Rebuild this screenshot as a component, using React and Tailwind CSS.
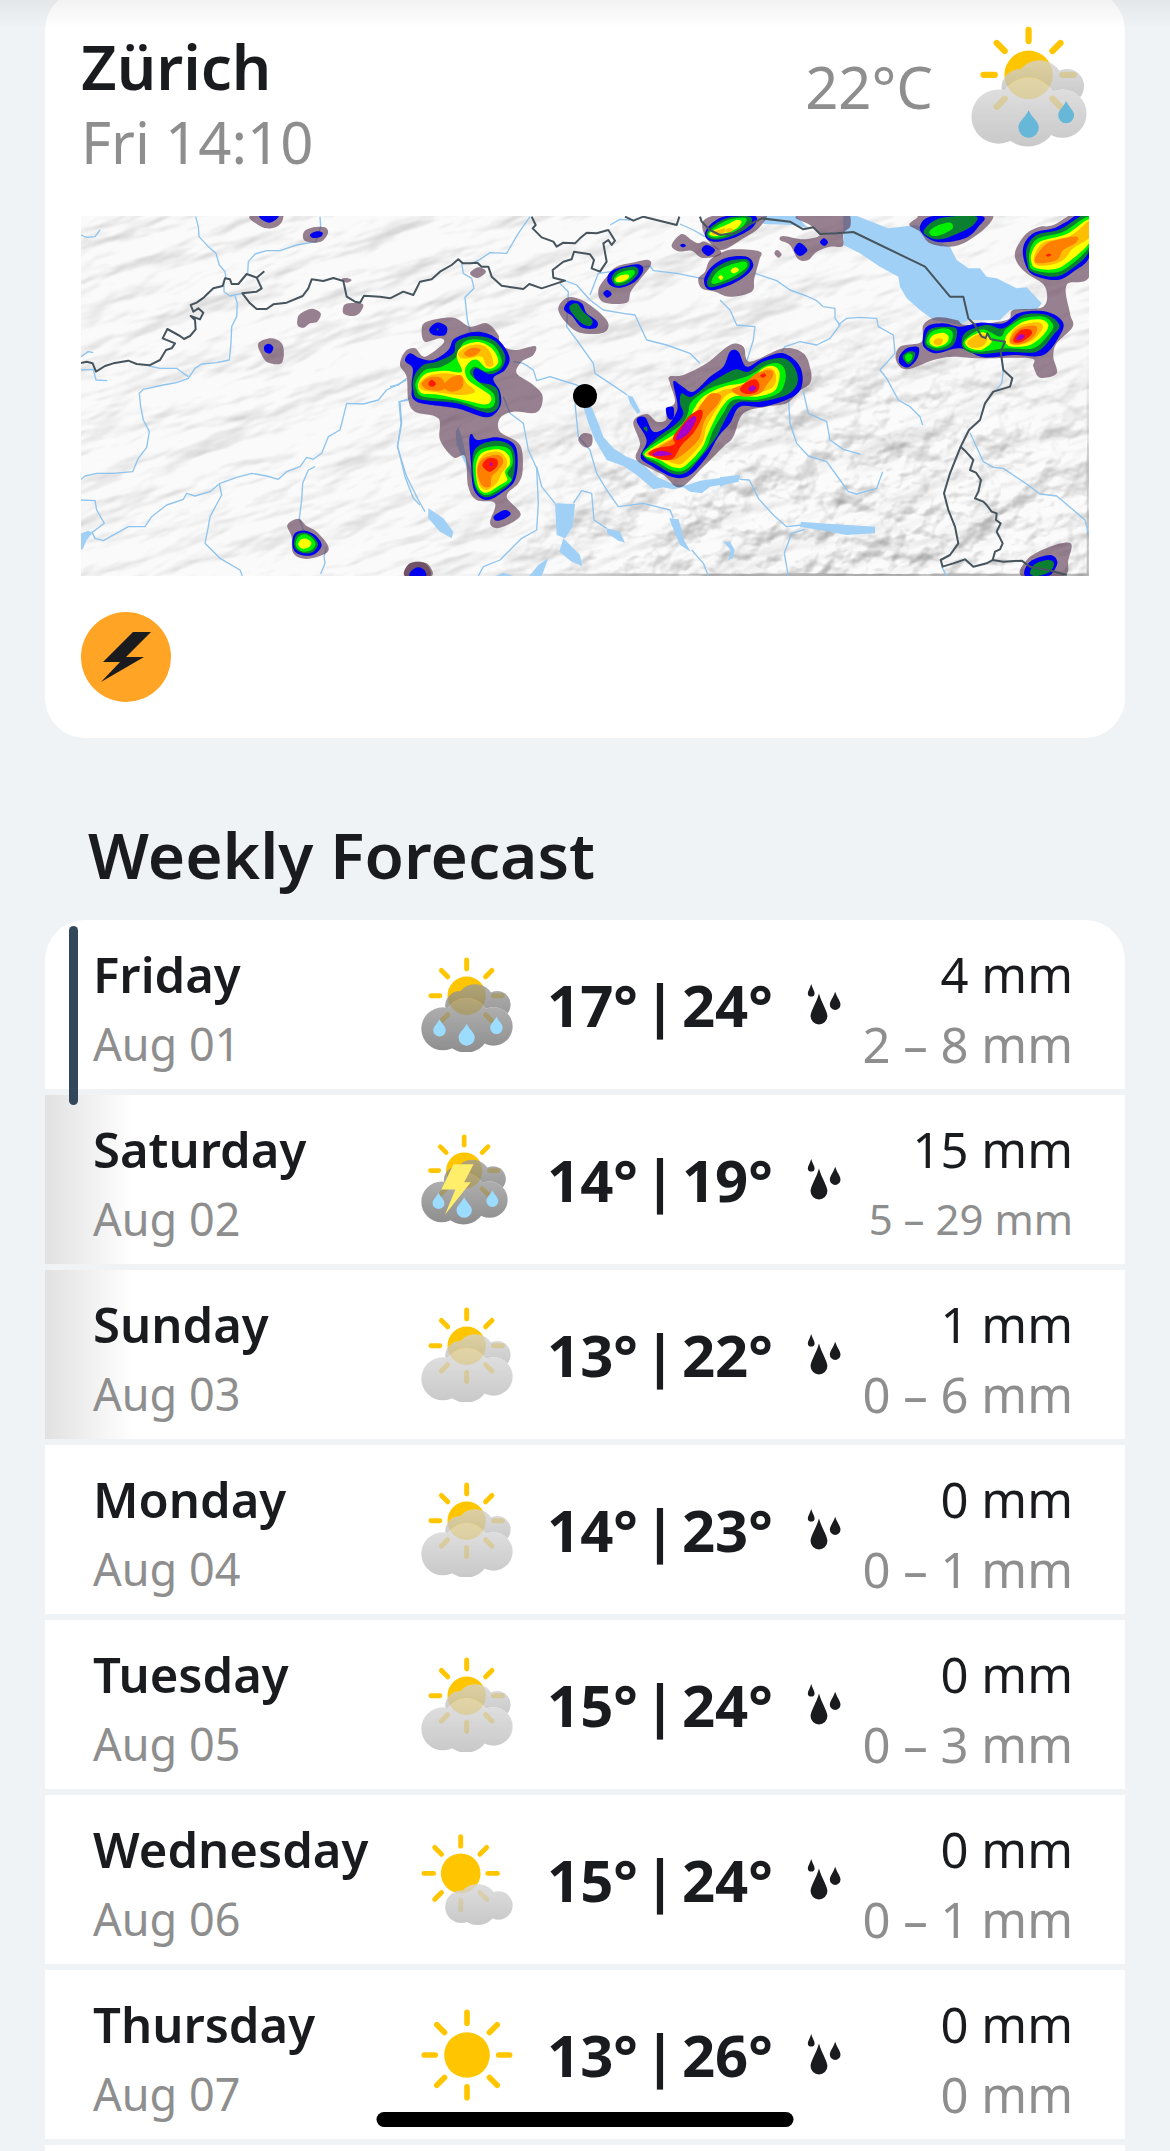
import React, { useId } from "react";

const FONT = "font-['Noto_Sans','Open_Sans',sans-serif]";

const forecast = [
    { day: "Friday", date: "Aug 01", icon: "rain", min: 17, max: 24, rain: "4 mm", range: "2 – 8 mm", current: true },
    { day: "Saturday", date: "Aug 02", icon: "thunder", min: 14, max: 19, rain: "15 mm", range: "5 – 29 mm", weekend: true },
    { day: "Sunday", date: "Aug 03", icon: "cloudy", min: 13, max: 22, rain: "1 mm", range: "0 – 6 mm", weekend: true },
    { day: "Monday", date: "Aug 04", icon: "cloudy", min: 14, max: 23, rain: "0 mm", range: "0 – 1 mm" },
    { day: "Tuesday", date: "Aug 05", icon: "cloudy", min: 15, max: 24, rain: "0 mm", range: "0 – 3 mm" },
    { day: "Wednesday", date: "Aug 06", icon: "fair", min: 15, max: 24, rain: "0 mm", range: "0 – 1 mm" },
    { day: "Thursday", date: "Aug 07", icon: "sunny", min: 13, max: 26, rain: "0 mm", range: "0 mm" },
];

/* ---------- weather icons ---------- */

const dropPath = (cx, top, bottom, w) => {
    const r = w / 2;
    const cy = bottom - r;
    return `M${cx} ${top}C${cx + r * 0.35} ${top + (cy - top) * 0.45} ${cx + r} ${cy - r * 0.6} ${cx + r} ${cy}A${r} ${r} 0 0 1 ${cx - r} ${cy}C${cx - r} ${cy - r * 0.6} ${cx - r * 0.35} ${top + (cy - top) * 0.45} ${cx} ${top}Z`;
};

const Sun = ({ cx, cy, r, inner, outer, width, angles }) => (
    <g>
        <circle cx={cx} cy={cy} r={r} fill="#ffc600" />
        {angles.map((angle) => (
            <line
                key={angle}
                x1={cx}
                x2={cx}
                y1={cy - inner}
                y2={cy - outer}
                stroke="#ffc600"
                strokeWidth={width}
                strokeLinecap="round"
                transform={`rotate(${angle} ${cx} ${cy})`}
            />
        ))}
    </g>
);

const RAYS = [0, 45, 90, 135, 180, 225, 270, 315];

const FrontCloud = () => (
    <>
        <circle cx="128" cy="297" r="65" />
        <circle cx="200" cy="270" r="67" />
        <circle cx="198" cy="297" r="72" />
        <circle cx="281" cy="290" r="58" />
    </>
);

const CloudyIcon = ({ dark, drops = [], dropColor = "#9bdcff", bolt, bottomRay, className }) => {
    const id = useId();
    const angles = bottomRay ? RAYS : RAYS.filter((a) => a !== 180);
    return (
        <svg viewBox="62 80 278 290" className={className} aria-hidden="true">
            <defs>
                <linearGradient id={id + "b"} gradientUnits="userSpaceOnUse" x1="0" y1="162" x2="0" y2="270">
                    <stop offset="0" stopColor={dark ? "#9a9a9a" : "#d3d3d3"} />
                    <stop offset="1" stopColor={dark ? "#767676" : "#b6b6b6"} />
                </linearGradient>
                <linearGradient id={id + "f"} gradientUnits="userSpaceOnUse" x1="0" y1="203" x2="0" y2="369">
                    <stop offset="0" stopColor={dark ? "#9f9f9f" : "#dadada"} />
                    <stop offset="1" stopColor={dark ? "#6c6c6c" : "#b9b9b9"} />
                </linearGradient>
                {/* keeps the back cloud from showing through the front one */}
                <mask id={id + "m"}>
                    <rect x="60" y="78" width="284" height="296" fill="#fff" />
                    <g fill="#000">
                        <FrontCloud />
                    </g>
                </mask>
            </defs>
            <Sun cx={200} cy={197} r={58} inner={81} outer={108} width={15} angles={angles} />
            <g mask={`url(#${id}m)`}>
                <g opacity="0.77" fill={`url(#${id}b)`}>
                    <circle cx="180" cy="228" r="45" />
                    <circle cx="226" cy="220" r="58" />
                    <circle cx="292" cy="224" r="41" />
                </g>
            </g>
            <g opacity="0.77" fill={`url(#${id}f)`}>
                <FrontCloud />
            </g>
            {drops.map((d, i) => (
                <path key={i} d={dropPath(...d)} fill={dropColor} />
            ))}
            {bolt && <path d="M166 177H230L200 234H221L138 339L172 257H127Z" fill="#ffee6a" />}
        </svg>
    );
};

const FairIcon = ({ className }) => {
    const id = useId();
    return (
        <svg viewBox="62 98 278 276" className={className} aria-hidden="true">
            <defs>
                <linearGradient id={id} gradientUnits="userSpaceOnUse" x1="0" y1="250" x2="0" y2="373">
                    <stop offset="0" stopColor="#d8d8d8" />
                    <stop offset="1" stopColor="#bebebe" />
                </linearGradient>
            </defs>
            <Sun cx={182} cy={217} r={60} inner={82} outer={111} width={15} angles={RAYS} />
            <g opacity="0.84" fill={`url(#${id})`}>
                <circle cx="184" cy="318" r="49" />
                <circle cx="233" cy="311" r="62" />
                <circle cx="296" cy="314" r="43" />
            </g>
        </svg>
    );
};

const SunnyIcon = ({ className }) => (
    <svg viewBox="62 627 278 278" className={className} aria-hidden="true">
        <Sun cx={201} cy={766} r={69} inner={96} outer={129} width={17} angles={RAYS} />
    </svg>
);

const THREE_DROPS = [[118, 267, 320, 38], [200, 282, 348, 49], [290, 260, 313, 38]];

const WeatherIcon = ({ type }) => {
    switch (type) {
        case "rain":
            return <CloudyIcon className="w-[92px]" dark drops={THREE_DROPS} />;
        case "thunder":
            return <CloudyIcon className="w-[87px]" dark drops={THREE_DROPS} bolt />;
        case "fair":
            return <FairIcon className="w-[92px]" />;
        case "sunny":
            return <SunnyIcon className="w-[92px]" />;
        default:
            return <CloudyIcon className="w-[92px]" bottomRay />;
    }
};

const DropsIcon = () => (
    <svg viewBox="0 0 105 127" className="w-[35px]" fill="#1a1b1f" aria-hidden="true">
        <path d={dropPath(13, 0, 39, 21)} />
        <path d={dropPath(37, 29, 125, 52)} />
        <path d={dropPath(87, 24, 80, 33)} />
    </svg>
);

/* ---------- radar map ---------- */

// closed Catmull-Rom curve through "x,y x,y ..." points
const smooth = (points) => {
    const p = points.trim().split(/\s+/).map((s) => s.split(",").map(Number));
    const n = p.length;
    let d = `M${p[0][0]} ${p[0][1]}`;
    for (let i = 0; i < n; i++) {
        const a = p[(i - 1 + n) % n];
        const b = p[i];
        const c = p[(i + 1) % n];
        const e = p[(i + 2) % n];
        d += `C${b[0] + (c[0] - a[0]) / 6} ${b[1] + (c[1] - a[1]) / 6} ${c[0] - (e[0] - b[0]) / 6} ${c[1] - (e[1] - b[1]) / 6} ${c[0]} ${c[1]}`;
    }
    return d + "Z";
};

const LEVELS = {
    blue: "#0000f0",
    forest: "#0a8030",
    green: "#00f000",
    yellow: "#ffff00",
    amber: "#ffbf00",
    orange: "#ff7f00",
    red: "#ff1c00",
    purple: "#a800c8",
};

// the map is split into three tiles, each with its own origin
const tiles = [
    {
        x: -3,
        lakes: ["0,972 25,962 38,968 20,990 8,1018 0,1020"],
        rivers: [
            "3,75 20,82 45,80 60,60",
            "347,20 355,50 357,80 385,110 408,130 418,165 435,185 438,205",
            "720,20 722,50 708,95 650,105 600,122 560,122 525,132 505,155 503,190",
            "432,215 432,245 450,258 487,250",
            "465,258 472,280 470,320 455,350 453,400 448,450 410,458 365,462 345,475 325,505 290,518 250,525 190,538 178,550 182,590 190,630 208,665 200,712 175,745 158,785 100,790 50,790 15,798 3,808",
            "208,468 240,475 290,475 310,490 325,500",
            "3,480 40,478 48,510 82,512",
            "3,440 25,425 40,428",
            "3,870 45,872 50,900 73,940 35,968",
            "35,965 45,985 70,992 145,950 195,950 215,920 260,885 310,868 320,850 345,858 390,845 420,820 470,802 515,790 560,798 595,808 620,785 660,770 680,742 700,748 725,730 745,680 780,660 800,580 850,582 895,570 920,540 960,520 980,510",
            "418,822 425,855 390,920 385,950 375,1000 420,1045 480,1080 487,1098",
            "705,770 685,780 668,820 665,870 658,925 670,960",
            "740,1010 732,1040 735,1060 722,1092",
            "985,570 957,575 963,640 953,710 975,800 1000,865 1020,885",
        ],
        borders: [
            "0,460 20,455 38,460 48,485 75,468 100,460 145,452 170,462 208,466 240,450 258,420 275,415 285,400 248,385 262,357 300,378 312,387 330,378 347,358 345,330 332,318 360,328 370,308 355,295 340,305 332,285 350,278 372,262 400,235 428,228 435,205 450,208 455,222 475,222 500,192 530,203 553,184",
            "530,203 545,235 530,245 487,250 510,280 530,297 560,297 580,283 620,278 668,258 685,235 695,208 730,213 760,204 790,213 800,260 825,275 840,278 852,257 900,260 930,265",
        ],
        haze: [
            "510,18 535,45 560,55 590,50 608,30 600,5",
            "672,65 700,52 735,52 744,68 728,92 700,98 672,90",
            "652,330 660,312 695,296 722,310 712,335 690,340 672,353 654,348",
            "790,290 805,280 848,282 842,305 822,318 792,312",
            "785,207 800,204 815,210 800,218",
            "535,400 575,385 608,405 606,458 565,458 545,435",
            "622,945 655,926 680,948 710,965 743,1005 738,1030 680,1047 640,1030 635,980",
            "975,1098 990,1060 1035,1060 1050,1098",
        ],
        cells: {
            blue: [
                "538,18 565,38 592,25 595,5",
                "690,74 710,64 728,68 722,80 700,84",
                "553,408 567,401 580,412 572,430 555,425",
                "637,1000 645,970 675,962 705,975 725,1005 705,1032 675,1037 645,1025",
                "990,1098 1000,1078 1030,1078 1035,1098",
            ],
            forest: ["642,1000 650,975 675,968 700,980 714,1003 700,1025 675,1030 650,1020"],
            green: ["647,1000 655,980 675,973 695,983 707,1002 695,1020 672,1025 653,1016"],
            yellow: ["655,1000 664,988 680,986 694,998 686,1012 670,1016 658,1010"],
        },
    },
    {
        x: 927,
        lakes: [
            "580,590 605,592 625,640 640,680 670,715 710,740 750,755 800,800 850,822 890,826 930,812 1020,800 1050,796 1045,816 960,830 935,850 900,845 880,832 850,838 820,832 790,838 740,795 700,768 650,750 615,690 595,640",
            "712,555 728,560 752,605 742,612 720,580",
            "495,880 555,882 548,950 525,985 500,975",
            "520,985 570,1035 577,1068 545,1055 508,1025",
            "115,895 160,925 190,965 185,985 150,965 115,925",
            "205,650 218,690 228,740 285,880 265,850 225,760 200,705 197,665",
            "650,955 690,965 705,998 685,992 652,970",
            "838,925 866,928 882,990 902,1025 870,1005 845,945",
            "418,1098 445,1065 475,1045 455,1098",
            "318,1098 340,1088 370,1098",
            "1000,995 1020,995 1034,1020 1028,1045 1015,1050 1022,1020",
        ],
        rivers: [
            "420,20 385,70 350,130 300,128 270,148 250,158",
            "215,160 220,190 245,205 252,235 225,262 232,330 245,380",
            "660,45 690,28 720,30",
            "870,42 910,60 945,80",
            "0,530 25,525 50,505",
            "60,565 30,575 35,640 22,710 50,800 85,870 105,905",
            "370,455 400,460 430,480 440,512 480,500 560,525 600,545",
            "340,560 360,610 400,640 415,720 440,775 445,880 440,960 395,985 330,1050 280,1070 265,1098",
            "440,770 455,830 495,880",
            "555,580 565,680 600,720 620,790 650,840 685,890 760,880 840,900 850,925",
            "550,880 575,842 605,850 612,930 650,955",
            "510,220 535,245 530,350 560,390 610,460 615,490 660,520 712,555",
            "525,212 560,225 600,270 640,300 700,310 735,315 770,390 830,405 900,430 930,460",
            "600,255 625,190 700,180 780,168 790,182 860,190 950,208",
            "905,1020 940,1060 955,1098",
        ],
        borders: [
            "0,265 40,245 70,255 90,215 125,208 150,185 185,165 205,148 218,160 240,160 262,158 275,170 295,170 305,200 335,227 400,237 418,222 455,235 525,212 490,203 488,180 520,155 545,148 552,125 600,133 612,150 605,175 630,185 650,155 640,100 655,90 665,105 675,92 655,60 620,70 590,68 570,85 555,100 520,98 500,110 490,95 455,82 428,55 437,45 425,20",
            "705,20 730,32 760,20 860,45 868,20",
            "930,20 935,35 960,60 990,75",
        ],
        haze: [
            "95,360 110,335 190,323 240,350 290,340 325,375 330,405 375,420 435,408 430,435 395,455 380,490 430,525 458,560 440,607 370,605 330,625 330,665 390,705 398,780 385,820 350,860 392,915 330,953 300,940 315,880 260,870 235,830 225,740 190,742 150,690 145,625 75,605 55,570 50,500 30,465 45,425 75,415 105,440 160,400 150,385 105,395",
            "240,190 265,172 288,185 262,204",
            "505,300 520,270 550,262 600,285 653,335 640,368 570,368 530,340",
            "625,240 650,200 680,170 740,155 775,150 780,170 725,240 710,278 640,277",
            "565,690 580,670 605,675 605,705 585,712",
            "845,105 875,72 905,90 925,100 945,95 990,120 985,138 935,143 905,122 865,124",
            "925,205 945,185 960,150 1000,125 1040,118 1110,125 1108,150 1093,205 1085,245 1020,260 975,245 935,235",
            "940,65 960,20 1120,10 1110,50 1060,85 990,120",
            "730,635 770,612 800,635 828,630 830,600 855,575 840,520 838,500 880,495 950,460 1020,405 1060,410 1080,455 1180,415 1240,430 1262,480 1260,520 1225,545 1190,580 1130,590 1060,610 1030,680 1000,710 940,770 870,832 820,795 740,750 750,700",
            "45,1098 60,1060 110,1060 125,1098",
        ],
        cells: {
            blue: [
                "118,358 140,338 170,350 165,375 130,375",
                "45,452 60,430 90,445 130,450 175,420 195,385 260,365 320,385 358,440 345,480 310,505 330,545 330,590 290,622 200,595 80,575 65,530 68,475",
                "238,690 245,672 262,690 320,682 370,700 383,745 375,810 340,845 290,870 252,840 243,760",
                "312,918 345,900 362,912 340,928 318,932",
                "522,298 540,272 575,280 590,310 622,335 615,355 575,352 548,320",
                "652,205 670,180 740,163 760,180 735,215 690,233 660,225",
                "640,250 652,240 665,252 652,263",
                "870,105 880,101 888,107 878,112",
                "935,120 950,105 975,120 955,138",
                "942,210 965,170 1010,143 1070,140 1090,165 1070,195 1020,225 960,240",
                "945,70 965,40 1010,18 1095,18 1090,50 1040,80 985,95 955,90",
                "740,632 765,622 790,665 830,650 858,610 862,580 850,515 875,528 910,545 960,500 1000,470 1020,425 1045,425 1070,470 1120,445 1180,430 1230,470 1235,530 1200,565 1120,590 1050,590 1020,640 985,680 950,740 900,795 850,802 780,765 752,740 770,690",
                "828,595 850,592 850,625 835,625",
                "60,1098 75,1075 95,1075 108,1098",
            ],
            forest: [
                "140,355 146,357 142,362",
                "72,500 100,465 140,455 190,430 200,395 250,378 310,390 345,435 335,475 300,493 260,475 250,492 265,515 305,525 325,545 325,590 290,608 200,580 90,568 70,540",
                "248,740 270,705 320,692 360,705 375,740 370,800 345,835 290,862 255,830",
                "538,290 560,280 580,305 607,330 600,348 575,340 548,312",
                "665,205 685,180 735,170 745,190 715,220 680,227",
                "952,212 975,175 1020,152 1070,148 1078,170 1050,200 1000,222 960,232",
                "950,68 975,42 1020,22 1080,20 1080,45 1040,72 990,88 958,85",
                "760,655 770,650 772,665",
                "765,722 800,685 860,640 880,610 870,580 875,550 905,560 960,520 1010,490 1040,478 1075,485 1120,455 1180,445 1215,475 1222,520 1190,555 1110,575 1040,580 1000,640 980,680 930,745 890,787 850,792 800,765 765,745",
            ],
            green: [
                "78,515 105,480 155,470 200,440 220,398 260,388 310,405 335,450 325,475 290,485 255,470 240,490 270,520 310,550 312,585 280,595 200,572 100,560 80,540",
                "250,760 270,720 325,708 360,720 368,760 352,790 365,810 340,830 290,855 258,830",
                "672,206 690,188 728,180 733,193 710,213 680,220",
                "965,210 985,182 1020,165 1065,155 1070,172 1040,195 1000,214 970,222",
                "955,68 980,48 1020,28 1068,25 1060,48 1030,68 990,82 962,80",
                "760,725 800,695 865,650 885,630 895,605 905,575 960,535 1020,515 1080,495 1130,465 1165,460 1185,480 1185,515 1165,550 1100,570 1030,570 1000,610 970,660 945,720 890,777 850,782 800,755 765,740",
            ],
            yellow: [
                "85,520 110,490 165,482 215,485 200,440 215,410 265,396 305,415 325,450 315,470 290,475 262,450 240,455 225,480 235,510 270,535 303,560 290,583 230,572 150,555 95,550",
                "258,770 275,730 325,718 355,735 360,762 345,785 352,810 330,825 290,848 265,830",
                "676,207 695,195 715,194 716,203 700,214 682,216",
                "985,202 993,196 1000,203 992,210",
                "1022,182 1035,172 1047,180 1032,190",
                "960,68 985,55 1015,42 1040,30 1055,35 1040,55 1010,68 980,78 962,76",
                "767,728 805,702 865,665 895,640 910,600 940,560 1000,530 1070,515 1120,475 1150,468 1168,485 1165,520 1150,545 1100,560 1030,560 990,600 955,670 935,715 885,768 850,772 805,748 770,740",
            ],
            amber: [
                "88,522 115,498 165,490 215,500 230,520 255,545 215,555 150,548 98,540",
                "205,430 235,408 275,405 300,425 310,465 290,468 275,440 240,445 215,445",
                "260,775 280,735 325,725 348,745 350,770 335,790 320,820 290,840 268,825",
                "965,68 985,60 1005,55 1000,70 975,75",
                "770,728 805,708 870,670 900,640 920,600 945,570 1000,540 1080,525 1120,480 1145,476 1158,495 1150,530 1100,548 1020,550 985,590 950,650 935,700 880,758 850,760 810,742 775,738",
                "1006,62 1020,54 1030,60 1015,68",
            ],
            orange: [
                "95,520 120,502 155,505 165,530 150,542 110,538",
                "160,530 180,505 210,495 220,510 215,535 185,545",
                "222,430 245,414 272,418 258,435 235,440",
                "262,780 280,745 325,735 340,755 325,780 305,800 300,830 275,825",
                "775,730 810,710 870,672 905,635 930,590 960,552 992,555 985,580 945,630 925,690 870,740 840,750 800,740",
                "1025,540 1060,522 1100,490 1140,480 1150,495 1130,525 1110,550 1060,560",
            ],
            red: [
                "116,518 125,509 138,520 130,530 118,528",
                "278,762 295,745 320,748 322,768 300,785 282,775",
                "775,730 800,715 840,708 855,700 850,680 880,640 905,612 935,600 935,625 910,670 875,705 850,745 820,750 790,740",
                "1050,540 1065,520 1095,508 1108,525 1100,545 1070,552",
                "1110,497 1122,490 1128,497 1118,503",
            ],
            purple: [
                "860,680 885,640 912,618 918,630 895,670 865,690",
                "788,732 810,722 840,728 842,735 800,738",
                "299,762 304,757 307,764 302,768",
                "1075,537 1088,526 1098,535 1085,545",
            ],
        },
    },
    {
        x: 1917,
        lakes: [
            "370,18 410,18 505,55 590,45 640,90 690,110 710,150 745,175 780,175 800,200 830,205 890,235 920,232 965,280 950,300 870,300 840,330 780,330 745,330 720,345 640,330 600,300 560,265 540,230 535,200 480,170 420,130 370,105",
            "130,18 230,18 250,40 265,55 220,45 130,42",
            "243,935 300,940 465,950 465,970 380,975 330,965 240,950",
            "0,802 55,795 60,808 0,830",
        ],
        rivers: [
            "105,190 170,212 210,240 260,258 290,272 310,290 345,295 345,325 360,345 330,385 290,405 240,395 195,410 185,425",
            "355,345 380,325 420,322 470,325 475,350 520,375 525,430 480,480 500,505 535,570 570,590 600,620 608,645",
            "0,270 30,300 50,345 105,350 100,390 80,455",
            "250,545 265,610 320,635 330,690 370,718 422,733",
            "205,560 210,640 230,700 265,738 320,755 360,810 385,845 410,852 470,835 488,785",
            "60,808 88,810 115,865 160,915 200,950 245,945",
            "255,958 215,970 193,1030 205,1098",
            "850,480 845,520 825,545",
            "750,668 790,755 820,772 850,775 920,822 960,852 1010,858 1060,900 1095,930 1105,970",
            "690,18 690,30",
            "665,1070 680,1098",
        ],
        borders: [
            "0,75 40,70 85,45 125,25 210,35 250,58 280,52 300,72 350,70 400,66 615,170 690,260 730,260 745,325 765,345 785,380 797,384 802,370 812,388 855,395 842,425 850,480 877,505 870,530 820,545 795,580 780,630 747,660 722,710 690,790 672,850 685,900 705,950 715,1000 690,1035 662,1050 668,1070 700,1060 735,1048 760,1070 800,1060 818,1050 850,1055 905,1052 930,1070 985,1080 1040,1095",
            "722,710 735,722 760,750 750,780 768,788 783,810 775,845 765,865 790,875 800,885 815,905 830,910 828,930 842,940 830,965 838,980 848,1000 840,1018 825,1025 818,1050",
        ],
        haze: [
            "230,18 370,0 392,45 370,70 368,108 330,110 290,125 265,150 235,148 210,105 180,90 190,78 250,88 300,75 270,45",
            "163,130 172,120 185,133 175,143",
            "568,45 590,25 620,5 800,5 820,20 795,55 740,95 690,110 630,100 600,65",
            "887,120 920,70 960,50 1000,45 1110,0 1110,195 1040,225 1050,310 1058,350 1010,400 1000,440 1010,490 960,503 940,470 930,445 780,445 700,440 640,450 560,478 528,450 540,410 605,395 610,345 650,322 710,330 740,345 860,330 880,300 970,290 975,230 920,190 890,155",
            "905,1098 925,1045 990,1010 1052,1000 1045,1050 1030,1098",
        ],
        cells: {
            blue: [
                "222,120 238,98 262,120 240,138",
                "300,97 312,85 324,97 313,108",
                "600,48 640,18 785,18 775,50 735,85 660,97 615,78",
                "910,110 940,70 1000,55 1040,35 1110,0 1110,135 1060,185 1010,210 940,195 915,160",
                "538,440 560,415 595,412 592,445 565,472 540,462",
                "608,390 620,350 670,340 720,350 780,338 850,340 900,308 980,305 1028,335 1020,375 970,435 880,435 790,442 720,415 650,430 615,415",
                "915,1098 930,1055 990,1035 1012,1055 1000,1085 980,1098",
            ],
            forest: [
                "612,60 660,25 765,18 760,45 710,72 660,88 625,80",
                "920,115 950,75 1020,58 1110,10 1110,118 1050,180 1000,200 935,185 922,160",
                "548,440 565,425 585,428 580,450 565,463",
                "615,390 630,358 675,350 710,358 700,405 655,422 620,410",
                "725,395 740,365 800,345 850,355 910,315 980,315 1018,345 1000,375 950,425 860,425 780,432 735,420",
                "930,1090 945,1062 985,1050 1002,1060 990,1085 950,1098",
            ],
            green: [
                "628,65 650,48 690,38 698,55 670,72 640,78",
                "930,120 955,85 1030,65 1110,20 1110,105 1045,170 1000,188 940,180 928,160",
                "555,440 566,430 577,436 573,450 562,455",
                "620,390 635,365 675,355 698,368 690,400 655,415 625,405",
                "730,397 750,375 790,358 840,380 860,355 910,325 970,320 1000,345 985,375 940,415 860,415 780,425 740,417",
            ],
            yellow: [
                "935,130 960,95 1040,72 1110,28 1110,95 1040,160 1000,178 950,175 935,160",
                "628,392 640,375 670,368 686,380 678,400 652,410 635,405",
                "735,397 752,380 785,367 808,378 815,395 800,410 780,420 748,414",
                "855,390 866,368 910,335 960,328 985,345 970,375 930,405 880,410 862,405",
            ],
            amber: [
                "942,140 970,98 1050,78 1110,32 1110,80 1060,115 1030,150 990,165 950,165",
                "640,395 652,385 668,388 664,403 648,405",
                "742,397 760,380 785,372 802,385 795,402 780,412 752,412",
                "868,390 885,355 925,340 960,338 968,355 940,390 900,405 875,403",
            ],
            orange: [
                "945,145 975,105 1010,90 1070,80 1068,98 1030,120 1010,150 955,160",
                "870,390 890,360 925,348 950,350 945,375 915,398 880,403",
            ],
            red: [
                "978,136 985,131 994,134 984,140",
                "880,388 900,362 928,358 935,372 910,393 888,398",
            ],
            purple: ["890,384 902,373 915,377 905,388 893,391"],
        },
    },
];

const Relief = ({ id, frequency, seed, scale }) => (
    <filter id={id} x="0" y="0" width="100%" height="100%" colorInterpolationFilters="sRGB">
        <feTurbulence type="fractalNoise" baseFrequency={frequency} numOctaves="4" seed={seed} />
        <feColorMatrix values="0 0 0 0 0 0 0 0 0 0 0 0 0 0 0 1 0 0 0 0" />
        <feGaussianBlur stdDeviation="2.5" />
        <feDiffuseLighting surfaceScale={scale} diffuseConstant="1.25" lightingColor="#fafafa">
            <feDistantLight azimuth="235" elevation="52" />
        </feDiffuseLighting>
    </filter>
);

const RadarMap = () => (
    <svg viewBox="0 0 3024 1080" className="block w-full" role="img" aria-label="Precipitation radar around Zürich">
        <defs>
            <Relief id="hills" frequency="0.003 0.011" seed="4" scale="26" />
            <Relief id="peaks" frequency="0.008 0.01" seed="7" scale="42" />
            <radialGradient id="alps" gradientUnits="userSpaceOnUse" cx="0" cy="0" r="1" gradientTransform="translate(2350 1050) scale(1250 780)">
                <stop offset="0" stopColor="#fff" />
                <stop offset="0.6" stopColor="#aaa" />
                <stop offset="1" stopColor="#000" />
            </radialGradient>
            <mask id="alpsMask">
                <rect width="3024" height="1080" fill="url(#alps)" />
            </mask>
        </defs>
        <rect width="3024" height="1080" fill="#f9f9f9" />
        <g opacity="0.2" transform="rotate(-16)">
            <rect x="-400" y="-100" width="3700" height="2100" filter="url(#hills)" />
        </g>
        <g mask="url(#alpsMask)">
            <rect width="3024" height="1080" filter="url(#peaks)" opacity="0.32" />
        </g>
        {tiles.map((tile) => (
            <g key={tile.x} transform={`translate(${tile.x} -18)`} fill="none" strokeLinejoin="round">
                {tile.rivers.map((r) => (
                    <polyline key={r} points={r} stroke="#8fc4ee" strokeWidth="4" />
                ))}
                {tile.lakes.map((l) => (
                    <polygon key={l} points={l} fill="#a0d0f6" />
                ))}
            </g>
        ))}
        {tiles.map((tile) => (
            <g key={tile.x} transform={`translate(${tile.x} -18)`}>
                {tile.haze.map((h) => (
                    <path key={h} d={smooth(h)} fill="#5b354d" fillOpacity="0.62" />
                ))}
            </g>
        ))}
        {Object.keys(LEVELS).map((level) =>
            tiles.map((tile) => (
                <g key={level + tile.x} transform={`translate(${tile.x} -18)`} fill={LEVELS[level]}>
                    {(tile.cells[level] || []).map((c) => (
                        <path key={c} d={smooth(c)} />
                    ))}
                </g>
            ))
        )}
        {tiles.map((tile) => (
            <g key={tile.x} transform={`translate(${tile.x} -18)`} fill="none" stroke="#46545e" strokeWidth="6" strokeLinejoin="round">
                {tile.borders.map((b) => (
                    <polyline key={b} points={b} />
                ))}
            </g>
        ))}
        <circle cx="1512" cy="540" r="36" />
    </svg>
);

/* ---------- page ---------- */

const CurrentWeather = () => (
    <section className="-mt-2.5 rounded-[40px] bg-white px-9 pt-9 pb-9">
        <div className="flex items-start justify-between">
            <div>
                <h1 className="text-[62px] leading-20 font-semibold">Zürich</h1>
                <p className="text-[58px] leading-18 text-[#8e8e8e]">Fri 14:10</p>
            </div>
            <div className="flex items-center gap-[38px] pr-0.5">
                <span className="text-[58px] leading-18 text-[#8e8e8e]">22°C</span>
                <CloudyIcon className="w-[116px]" drops={THREE_DROPS.slice(1)} dropColor="#66b7d8" />
            </div>
        </div>
        <div className="mt-[38px]">
            <RadarMap />
        </div>
        <button type="button" aria-label="Thunderstorm warning" className="mt-9 block size-[90px] rounded-full bg-[#ffa424]">
            <svg viewBox="0 0 90 90" aria-hidden="true">
                <path d="M52 20H70L45 45H63L20 70L39 50H22Z" fill="#1a1b1f" />
            </svg>
        </button>
    </section>
);

const ForecastRow = ({ item }) => (
    <li
        className={`relative grid h-[169px] grid-cols-[minmax(0,1fr)_126px_260px_34px_232px] pr-[52px] pl-12 ${
            item.weekend ? "bg-linear-to-r from-[#e1e1e1] to-white to-[88px] bg-white" : "bg-white"
        }`}
    >
        {item.current && <span className="absolute top-1.5 left-6 z-10 h-[179px] w-[9px] rounded-full bg-[#33475a]" />}
        <div className="pt-5">
            <h3 className="text-[49px] leading-17 font-semibold">{item.day}</h3>
            <p className="text-[45px] leading-18 text-[#8e8e8e]">{item.date}</p>
        </div>
        <div className="flex items-center">
            <WeatherIcon type={item.icon} />
        </div>
        <div className="flex items-center gap-1.5 text-[58px] font-bold">
            <span>{item.min}°</span>
            <span>|</span>
            <span>{item.max}°</span>
        </div>
        <div className="flex items-center">
            <DropsIcon />
        </div>
        <div className="pt-5 text-right whitespace-nowrap">
            <p className="text-[49px] leading-17">{item.rain}</p>
            {/* two-digit ranges need the smaller size to fit */}
            <p className={`leading-18 text-[#8e8e8e] ${item.range.length > 8 ? "text-[42px]" : "text-[49px]"}`}>{item.range}</p>
        </div>
    </li>
);

const App = () => {
    return (
        <div className={`relative h-screen overflow-hidden bg-[#eff3f6] px-[45px] text-[#1a1b1f] ${FONT}`}>
            <CurrentWeather />
            <h2 className="mt-[72px] mb-5 px-[43px] text-[64px] leading-[90px] font-semibold">Weekly Forecast</h2>
            <ul className="flex flex-col gap-1.5 [&>li:first-child]:rounded-t-[40px]">
                {forecast.map((item) => (
                    <ForecastRow key={item.day} item={item} />
                ))}
                <li className="h-[169px] bg-white" />
            </ul>
            <div className="absolute inset-x-0 top-0 h-7 bg-linear-to-b from-black/5 to-transparent" />
            <div className="absolute bottom-6 left-1/2 h-[15px] w-[417px] -translate-x-1/2 rounded-full bg-black" />
        </div>
    );
};

export default App;
